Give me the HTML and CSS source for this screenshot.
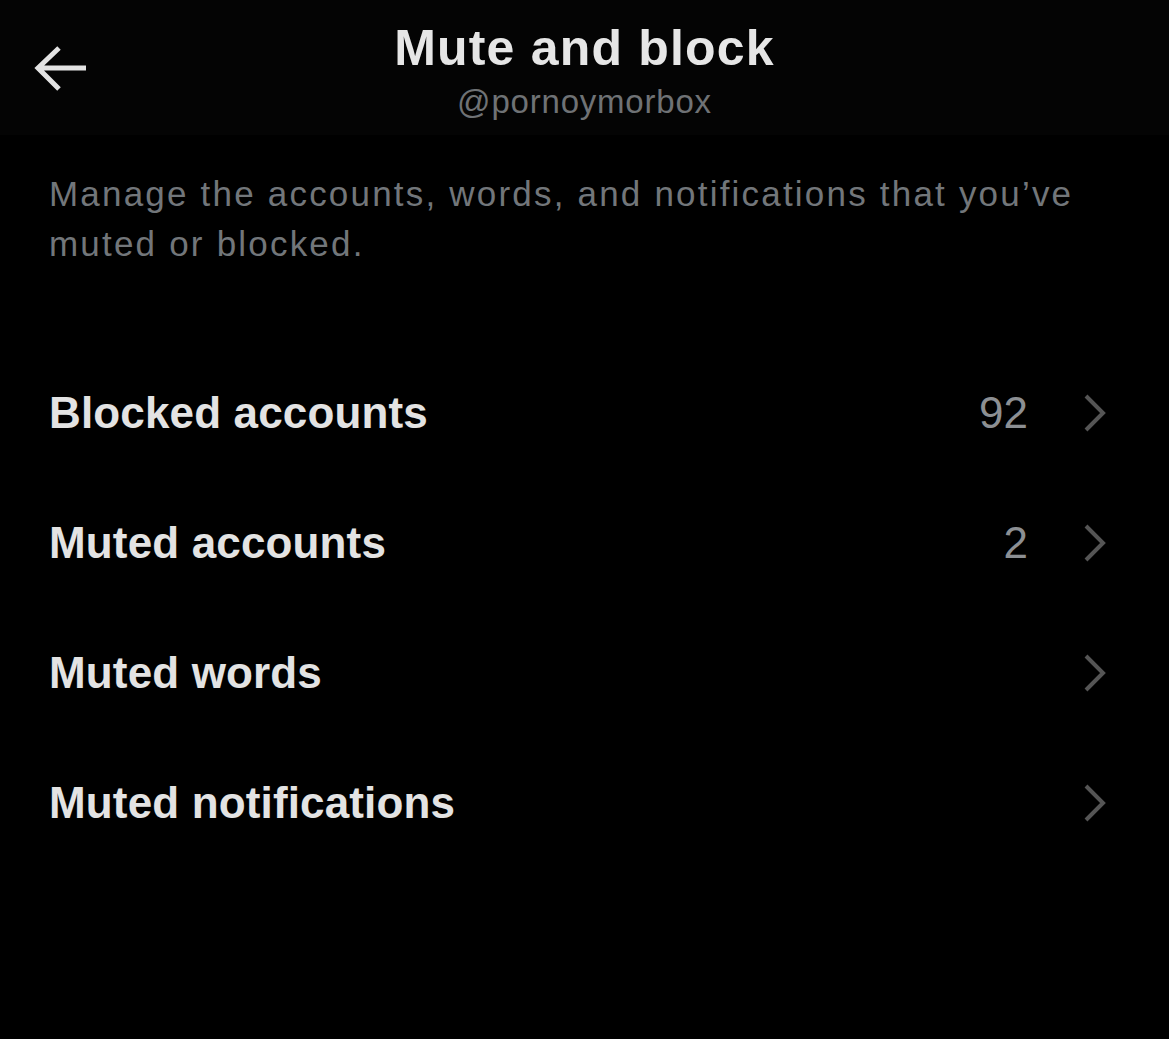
FILE: index.html
```html
<!DOCTYPE html>
<html lang="en">
<head>
<meta charset="utf-8">
<title>Mute and block</title>
<link rel="stylesheet" href="styles.css">
</head>
<body>
<div class="screen">
  <header class="topbar">
    <div class="back">
      <svg class="back-icon" width="54" height="46" viewBox="0 0 54 46">
        <path d="M52 22 H4 M25 2 L4 22 L25 43" fill="none" stroke="#e3e3e3" stroke-width="5" stroke-linecap="butt" stroke-linejoin="miter"/>
      </svg>
    </div>
    <div class="titles">
      <div class="title">Mute and block</div>
      <div class="handle">@pornoymorbox</div>
    </div>
    <div class="spacer"></div>
  </header>
  <p class="desc">Manage the accounts, words, and notifications that you’ve muted or blocked.</p>
  <ul class="list">
    <li class="row">
      <span class="label">Blocked accounts</span>
      <span class="count">92</span>
      <svg class="chev" width="24" height="38" viewBox="0 0 24 38"><path d="M3 2 L20 19 L3 36" fill="none" stroke="#555555" stroke-width="4"/></svg>
    </li>
    <li class="row">
      <span class="label">Muted accounts</span>
      <span class="count">2</span>
      <svg class="chev" width="24" height="38" viewBox="0 0 24 38"><path d="M3 2 L20 19 L3 36" fill="none" stroke="#555555" stroke-width="4"/></svg>
    </li>
    <li class="row">
      <span class="label">Muted words</span>
      <span class="count"></span>
      <svg class="chev" width="24" height="38" viewBox="0 0 24 38"><path d="M3 2 L20 19 L3 36" fill="none" stroke="#555555" stroke-width="4"/></svg>
    </li>
    <li class="row">
      <span class="label">Muted notifications</span>
      <span class="count"></span>
      <svg class="chev" width="24" height="38" viewBox="0 0 24 38"><path d="M3 2 L20 19 L3 36" fill="none" stroke="#555555" stroke-width="4"/></svg>
    </li>
  </ul>
</div>
</body>
</html>
```

FILE: styles.css
```css
html, body {
  margin: 0;
  padding: 0;
  background: #000;
}
body {
  font-family: "Liberation Sans", Arial, sans-serif;
  color: #e3e3e3;
  width: 1169px;
  height: 1039px;
  overflow: hidden;
}
.screen {
  display: flex;
  flex-direction: column;
}
.topbar {
  height: 135px;
  box-sizing: border-box;
  background: #040404;
  display: grid;
  grid-template-columns: 1fr auto 1fr;
  align-items: start;
}
.back {
  padding-left: 34px;
  padding-top: 46px;
}
.back-icon {
  display: block;
}
.titles {
  display: flex;
  flex-direction: column;
  align-items: center;
  padding-top: 23px;
}
.title {
  font-size: 50px;
  line-height: 50px;
  font-weight: 700;
  letter-spacing: 1.2px;
  color: #e6e6e6;
}
.handle {
  margin-top: 9px;
  font-size: 33px;
  line-height: 40px;
  letter-spacing: 0.8px;
  color: #6f7275;
}
.desc {
  margin: 0;
  padding: 34px 49px 0 49px;
  font-size: 35px;
  line-height: 50px;
  letter-spacing: 2.2px;
  color: #72767a;
}
.list {
  list-style: none;
  margin: 0;
  padding: 79px 0 0 0;
}
.row {
  height: 130px;
  display: flex;
  align-items: center;
  padding: 0 62px 0 49px;
}
.label {
  flex: 1;
  font-size: 44px;
  line-height: 44px;
  font-weight: 700;
  letter-spacing: 0.15px;
  color: #e3e3e3;
}
.count {
  font-size: 44px;
  line-height: 44px;
  color: #8c8f93;
}
.chev {
  display: block;
  margin-left: 55px;
}
```
